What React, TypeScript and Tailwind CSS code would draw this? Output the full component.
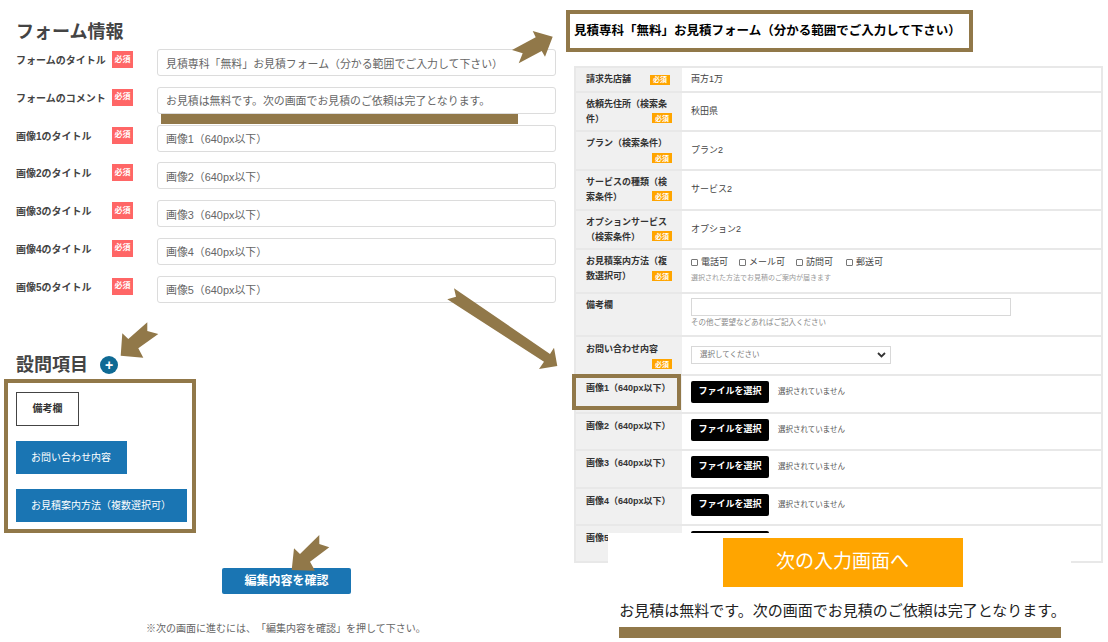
const font = { fontFamily: '"Liberation Sans","Noto Sans CJK JP",sans-serif' };

function ReqRed() {
  return (
    <span className="mt-[2px] inline-flex h-[17px] w-[21px] shrink-0 items-center justify-center bg-[#ff6666] text-[8px] font-bold leading-none text-white">
      必須
    </span>
  );
}

function ReqOrange({ className = "" }: { className?: string }) {
  return (
    <span className={"inline-flex h-[10px] w-[20px] shrink-0 items-center justify-center bg-[#ffa500] text-[7px] font-bold leading-none text-white " + className}>
      必須
    </span>
  );
}

function FieldRow({ label, value }: { label: string; value: string }) {
  return (
    <div className="flex h-[37.8px] items-start">
      <div className="flex w-[96px] shrink-0 items-center pt-[5px]">
        <span className="whitespace-nowrap text-[10px] font-bold leading-[14px] text-[#444]">{label}</span>
      </div>
      <ReqRed />
      <input
        readOnly
        value={value}
        className="ml-[24px] h-[27px] w-[399px] rounded-[3px] border border-[#dcdcdc] bg-white px-[8px] text-[10.9px] text-[#666] outline-none"
      />
    </div>
  );
}

function Row({ h, label, children, badge = "inline", bottom = "bottom-[6px]", pt = "pt-[4px]" }: { h: string; label: React.ReactNode; children: React.ReactNode; badge?: "inline" | "none"; bottom?: string; pt?: string }) {
  return (
    <div className={"flex border-b-2 border-[#e8e8e8] " + h}>
      <div className={"relative w-[106px] shrink-0 bg-[#f0f0f0] pl-[10px] pr-[12px] text-[9px] font-bold leading-[15px] text-[#333] " + pt}>
        {label}
        {badge === "inline" && <ReqOrange className={"absolute right-[10px] " + bottom} />}
      </div>
      <div className="min-w-0 flex-1 pl-[9px] text-[9px] text-[#444]">{children}</div>
    </div>
  );
}

function PlainValue({ text }: { text: string }) {
  return <div className="flex h-full items-center">{text}</div>;
}

function FileRow({ n, h }: { n: number; h: string }) {
  return (
    <Row h={h} badge="none" pt="pt-[5px]" label={<span className="whitespace-nowrap">画像{n}（640px以下）</span>}>
      <div className="flex items-center pt-[5px]">
        <span className="flex h-[22px] w-[78px] items-center justify-center rounded-[2px] bg-black text-[9px] font-bold text-white">ファイルを選択</span>
        <span className="ml-[9px] text-[7.5px] text-[#555]">選択されていません</span>
      </div>
    </Row>
  );
}

function Check({ label, w }: { label: string; w: string }) {
  return (
    <span className={"flex items-center " + w}>
      <span className="mr-[3px] h-[7px] w-[7px] rounded-[1px] border border-[#777] bg-white" />
      <span className="text-[9px] text-[#444]">{label}</span>
    </span>
  );
}

export default function App() {
  return (
    <div className="relative flex h-[642px] w-[1108px] overflow-hidden bg-white [text-spacing-trim:space-all]" style={font}>
      {/* left column */}
      <div className="w-[566px] shrink-0 pl-[16px]">
        <h2 className="mt-[21px] h-[28px] text-[18px] font-bold leading-[22px] text-[#444]">フォーム情報</h2>
        <div className="relative">
          <FieldRow label="フォームのタイトル" value="見積専科「無料」お見積フォーム（分かる範囲でご入力して下さい）" />
          <FieldRow label="フォームのコメント" value="お見積は無料です。次の画面でお見積のご依頼は完了となります。" />
          <div className="absolute left-[145px] top-[65px] h-[10px] w-[357px] bg-[#917849]" />
          <FieldRow label="画像1のタイトル" value="画像1（640px以下）" />
          <FieldRow label="画像2のタイトル" value="画像2（640px以下）" />
          <FieldRow label="画像3のタイトル" value="画像3（640px以下）" />
          <FieldRow label="画像4のタイトル" value="画像4（640px以下）" />
          <FieldRow label="画像5のタイトル" value="画像5（640px以下）" />
        </div>
        <div className="mt-[38px] flex h-[26px] items-center">
          <h2 className="text-[18px] font-bold leading-[22px] text-[#444]">設問項目</h2>
          <span className="ml-[12px] flex h-[18px] w-[18px] items-center justify-center rounded-full bg-[#0f6a94] text-[14px] font-bold leading-none text-white">+</span>
        </div>
        <div className="-ml-[12px] mt-[1px] h-[154px] w-[192px] border-4 border-[#917849] bg-white pl-[8px] pt-[9px]">
          <div className="flex h-[34px] w-[63px] items-center justify-center border border-[#444] bg-white text-[10px] font-bold text-[#333]">備考欄</div>
          <div className="mt-[15px] flex h-[33px] w-[111px] items-center bg-[#1a75b3] pl-[15px] text-[10px] text-white">お問い合わせ内容</div>
          <div className="mt-[15px] flex h-[33px] w-[171px] items-center bg-[#1a75b3] pl-[15px] text-[10px] text-white">お見積案内方法（複数選択可）</div>
        </div>
        <div className="ml-[206px] mt-[35px] flex h-[26px] w-[129px] items-center justify-center rounded-[2px] bg-[#1a75b3] text-[12px] font-bold text-white">編集内容を確認</div>
        <p className="ml-[130px] mt-[27px] whitespace-nowrap text-[10px] text-[#666]">※次の画面に進むには、「編集内容を確認」を押して下さい。</p>
      </div>

      {/* right column */}
      <div className="min-w-0 flex-1">
        <div className="mt-[10px] flex h-[42px] w-[407px] items-center whitespace-nowrap border-4 border-[#917849] pl-[4px] text-[12.5px] font-bold text-black">
          見積専科「無料」お見積フォーム（分かる範囲でご入力して下さい）
        </div>
        <div className="ml-[8px] mr-[5px] mt-[14px] border-x-2 border-t-2 border-[#e8e8e8]">
          <Row h="h-[25px]" badge="none" label={
            <span className="flex items-center justify-between"><span>請求先店舗</span><ReqOrange /></span>
          }>
            <PlainValue text="両方1万" />
          </Row>
          <Row h="h-[39px]" bottom="bottom-[7px]" label="依頼先住所（検索条件）"><PlainValue text="秋田県" /></Row>
          <Row h="h-[39px]" label="プラン（検索条件）"><PlainValue text="プラン2" /></Row>
          <Row h="h-[40px]" bottom="bottom-[8px]" label="サービスの種類（検索条件）"><PlainValue text="サービス2" /></Row>
          <Row h="h-[39px]" bottom="bottom-[7px]" label="オプションサービス（検索条件）"><PlainValue text="オプション2" /></Row>
          <Row h="h-[44px]" bottom="bottom-[11px]" label="お見積案内方法（複数選択可）">
            <div className="flex pt-[6px]">
              <Check label="電話可" w="w-[48px]" />
              <Check label="メール可" w="w-[57px]" />
              <Check label="訪問可" w="w-[50px]" />
              <Check label="郵送可" w="w-[40px]" />
            </div>
            <div className="mt-[3px] text-[7px] text-[#999]">選択された方法でお見積のご案内が届きます</div>
          </Row>
          <Row h="h-[43px]" badge="none" label="備考欄">
            <div className="mt-[4px] h-[18px] w-[320px] border border-[#d8d8d8] bg-white" />
            <div className="mt-[1px] text-[7.5px] text-[#888]">その他ご要望などあればご記入ください</div>
          </Row>
          <Row h="h-[39px]" pt="pt-[5px]" bottom="bottom-[5px]" label="お問い合わせ内容">
            <div className="mt-[9px] flex h-[18px] w-[200px] items-center justify-between border border-[#d8d8d8] bg-white pl-[8px] pr-[4px] text-[7.5px] text-[#777]">
              <span>選択してください</span>
              <svg width="9" height="6" viewBox="0 0 9 6" fill="none"><path d="M1 1l3.5 3.5L8 1" stroke="#333" strokeWidth="1.8" /></svg>
            </div>
          </Row>
          <FileRow n={1} h="h-[38px]" />
          <FileRow n={2} h="h-[37px]" />
          <FileRow n={3} h="h-[38px]" />
          <FileRow n={4} h="h-[37px]" />
          <FileRow n={5} h="h-[37px]" />
        </div>
      </div>

      {/* overlays */}
      <div className="absolute left-[572px] top-[374px] h-[36px] w-[109px] border-4 border-[#917849]" />
      <div className="absolute left-[608px] top-[533px] flex h-[109px] w-[463px] flex-col items-center bg-white pl-[6px]">
        <div className="mt-[5px] flex h-[49px] w-[240px] items-center justify-center bg-[#ffa500] text-[19px] text-white">次の入力画面へ</div>
        <p className="mt-[15px] whitespace-nowrap text-[15px] leading-[18px] text-[#222]">お見積は無料です。次の画面でお見積のご依頼は完了となります。</p>
        <div className="absolute left-[11px] top-[94px] h-[11px] w-[442px] bg-[#917849]" />
      </div>
      <svg className="pointer-events-none absolute left-0 top-0" width="1108" height="642" viewBox="0 0 1108 642">
        <polygon fill="#917849" points="552.7,36.7 532.7,31 535.7,37.3 512,50 522.7,53.3 518.7,63.3 541.7,51 545,56.7" />
        <polygon fill="#917849" points="557.3,366 554,347.7 550,354 454,288.3 456,296.7 447.3,299.3 544,361.7 539,369" />
        <polygon fill="#917849" points="120.7,355.7 122.3,333.3 128.3,339 147.3,322.3 147.3,331 158.3,334 138.3,348.3 143.3,357.7" />
        <polygon fill="#917849" points="291.7,570 294,548.3 300,554 319.3,535 319.3,544 329.3,547.3 310,561.7 315,570.7" />
      </svg>
    </div>
  );
}
